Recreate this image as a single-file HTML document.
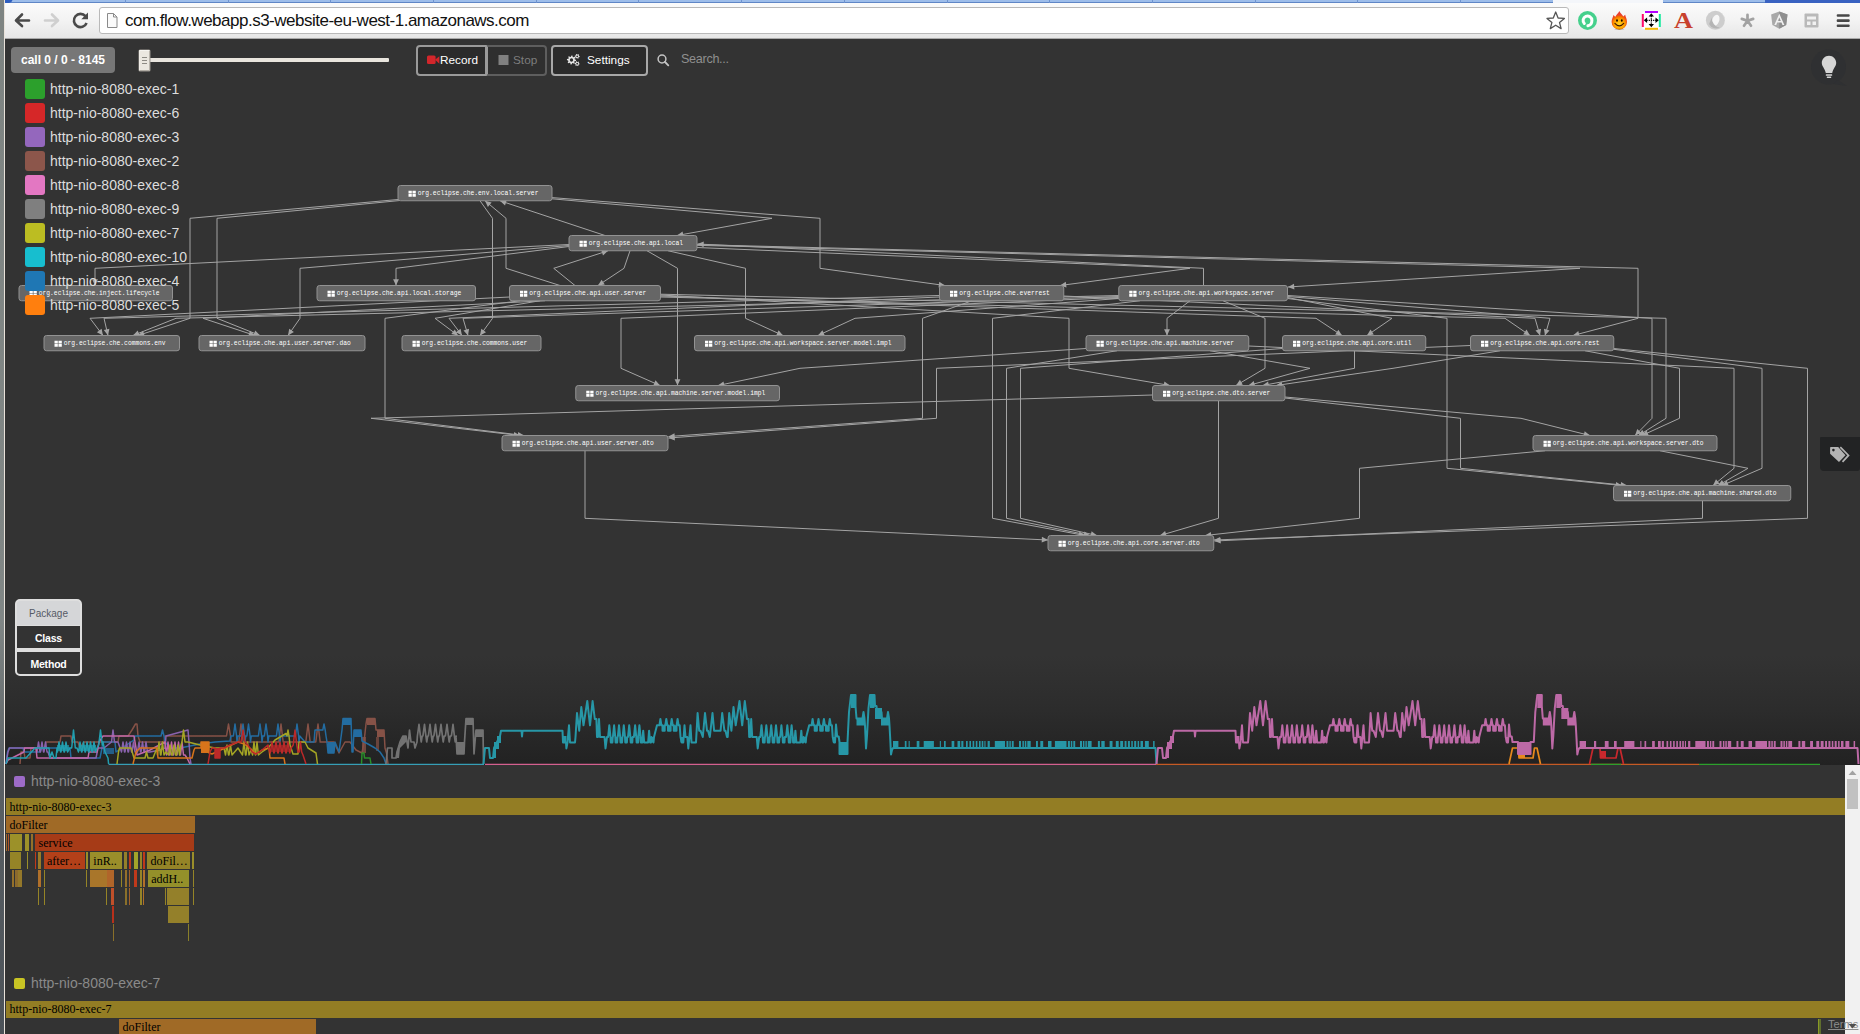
<!DOCTYPE html>
<html><head><meta charset="utf-8"><title>flow</title>
<style>
html,body{margin:0;padding:0}html{overflow:hidden;background:#333}
body{width:1860px;height:1034px;overflow:hidden;position:relative;background:#333;font-family:"Liberation Sans", sans-serif;}
.abs{position:absolute}
#strip{left:0;top:0;width:4px;height:1034px;background:linear-gradient(#7e8482 0,#808685 60%,#5a6064 75%,#4c5258 100%)}
#strip2{left:4px;top:0;width:1px;height:1034px;background:#e9e2da}
#tabs{left:5px;top:0;width:1855px;height:3px;background:#9dbdea}
#toolbar{left:5px;top:3px;width:1855px;height:35px;background:linear-gradient(#fbfbfb,#f3f3f3 50%,#e6e6e6)}
#tbline{left:5px;top:38px;width:1855px;height:1px;background:#a9a9a9}
#url{left:99px;top:7px;width:1468px;height:25px;background:#fff;border:1px solid #b9b9b9;border-radius:3px;box-sizing:content-box}
#urltxt{left:125px;top:10.5px;font-size:17px;line-height:20px;color:#111;white-space:nowrap;letter-spacing:-0.5px}
#badge{left:11px;top:47px;width:104px;height:26px;border-radius:4px;background:#777;color:#fff;font-weight:bold;font-size:12px;line-height:26px;text-align:center}
#track{left:144px;top:58px;width:245px;height:4px;background:#e9e5de;border-radius:1px}
#thumb{left:139px;top:50px;width:9px;height:19px;background:#ebe7e0;border:1px solid;border-color:#f6f4f0 #b9b4ac #b0aba3 #f0ede8;border-radius:1px;box-sizing:content-box;box-shadow:0 0 0 .5px #9a968f}
.btn{box-sizing:border-box;height:31px;top:45px;border:2px solid #999;background:#2b2b2b;color:#fff;font-size:13px;line-height:26px;white-space:nowrap}
.legrow{left:25px;height:20px;white-space:nowrap}
.legsw{position:absolute;left:0;top:0;width:20px;height:20px;border-radius:3px}
.legtx{position:absolute;left:25px;top:0;font-size:14px;line-height:20px;color:#ddd}
.lvl{left:17px;width:63px;text-align:center;font-size:10px;}
</style></head>
<body>
<svg class="abs" style="left:0;top:39px" width="1860" height="660" viewBox="0 39 1860 660" font-family='"Liberation Mono", monospace' font-size="6.3" fill="#fff"><path d="M398 199.5L190 218.3L190 318.3L138 335.5M400 200.5L217 218.3L217 318.3L260 335.5M480 200.75L492.5 218.3L492.5 318.3L480 335.5M552 198.8L772 218.3L677 235.5M552 197.6L820 218.3L820 268.3L945 285.5M560 285.5L506 268.3L506 218.3L485 200.75M605 235.5L500 200.75M575 285.5L553.75 268.3L608 250.75M630 250.75L624 268.3L598 285.5M647 250.75L677.5 268.3L677.5 385.5M668 250.75L745.5 268.3L745.5 318.3L783 335.5M569 246.5L396 268.3L396 285.5M569 245.5L300 268.3L300 318.3L288 335.5M569 244.5L95 268.3L95 285.5M697 247.5L1190 268.3L1060 285.5M697 245.3L1580 268.3L1288 287M697 244.6L1638 268.3L1638 318.3L1573 335.5M1203.5 285.5L1203.5 268.3L697.5 244M509.5 297L90 318.3L103 335.5M545 300.75L203 318.3L255 335.5M540 300.75L435 318.3L458 335.5M520 300.75L385 318.3L385 418.3L524 435.5M660.5 295L1069 318.3L1069 368.3L1170 385.5M660.5 296L1316 318.3L1342 335.5M660.5 297L1505 318.3L1530 335.5M660.5 294.2L1666 318.3L1666 418.3L1638.5 435.5M939.5 295.5L104 318.3L108 335.5M939.5 297L449 318.3L462 335.5M972 300.75L922.5 318.3L922.5 418.3L668.5 436.5M1063.75 296L1535 318.3L1540 335.5M1118.75 295.5L176 318.3L133 335.5M1118.75 296.5L463 318.3L468 335.5M1118.75 297.5L621 318.3L621 368.3L660 385.5M1118.75 298.5L855 318.3L818 335.5M1140 300.75L992.5 318.3L992.5 518.3L1085 535.5M1190 300.75L1167 318.3L1167 335.5M1223 300.75L1265 318.3L1265 368.3L1236 385.5M1287.5 297.5L1392 318.3L1367 335.5M1287.5 298.5L1447 318.3L1447 468.3L1622 485.5M1287.5 296.5L1550 318.3L1545 335.5M1287.5 295.5L1652 318.3L1652 418.3L1635 435.5M1086 348.5L800 368.3L718 385.5M1117 350.75L1006.5 368.3L1006.5 518.3L1090 535.5M1210 350.75L1310 368.3L1248.5 385.5M1248.75 346L1734 368.3L1734 468.3L1713 485.5M1282.5 348.5L1020.5 368.3L1020.5 518.3L1097 535.5M1354.5 350.75L1354.5 368.3L1262.5 385.5M1470.5 345.5L936.5 368.3L936.5 418.3L668.5 438M1500 350.75L1393 368.3L1276 385.5M1585 350.75L1679.5 368.3L1679.5 418.3L1642 435.5M1613.75 349.3L1762 368.3L1762 468.3L1722 485.5M1613.75 348.5L1807.5 368.3L1807.5 518.3L1214 540M1152.5 395L371 418.3L520 435.5M1218.5 400.75L1218.5 518.3L1160 535.5M1285 398L1460.5 418.3L1460.5 468.3L1627 485.5M1285 397L1521 418.3L1590 435.5M585 450.75L585 518.3L1048 540M1660 450.75L1748 468.3L1718 485.5M1545 450.75L1359.5 468.3L1359.5 518.3L1205 535.5M1702.5 500.75L1702.5 518.3L1214.5 541" fill="none" stroke="#a4a4a4" stroke-width="1"/><path d="M138.0 335.5L143.0 330.8L144.8 336.3zM260.0 335.5L253.2 335.9L255.3 330.5zM480.0 335.5L481.3 328.8L486.0 332.2zM677.0 235.5L682.6 231.5L683.6 237.2zM945.0 285.5L938.5 287.5L939.3 281.8zM485.0 200.8L491.6 202.5L487.9 207.0zM500.0 200.8L506.8 199.9L505.0 205.5zM608.0 250.8L603.0 255.4L601.2 249.9zM598.0 285.5L601.6 279.7L604.8 284.5zM677.5 385.5L674.6 379.3L680.4 379.3zM783.0 335.5L776.2 335.6L778.6 330.3zM396.0 285.5L393.1 279.3L398.9 279.3zM288.0 335.5L289.2 328.8L293.9 332.1zM95.0 285.5L92.1 279.3L97.9 279.3zM1060.0 285.5L1065.8 281.8L1066.5 287.6zM1288.0 287.0L1294.0 283.7L1294.4 289.5zM1573.0 335.5L1578.3 331.1L1579.7 336.7zM697.5 244.0L703.8 241.4L703.6 247.2zM103.0 335.5L96.9 332.3L101.6 328.8zM255.0 335.5L248.2 336.3L250.0 330.8zM458.0 335.5L451.3 334.1L454.8 329.5zM524.0 435.5L517.5 437.6L518.2 431.9zM1170.0 385.5L1163.4 387.3L1164.4 381.6zM1342.0 335.5L1335.2 334.5L1338.4 329.7zM1530.0 335.5L1523.2 334.4L1526.5 329.6zM1638.5 435.5L1642.2 429.8L1645.3 434.7zM108.0 335.5L103.8 330.1L109.4 328.8zM462.0 335.5L455.9 332.3L460.6 328.8zM668.5 436.5L674.5 433.2L674.9 438.9zM1540.0 335.5L1535.5 330.4L1541.1 328.7zM133.0 335.5L137.7 330.5L139.8 335.9zM468.0 335.5L463.5 330.4L469.1 328.7zM660.0 385.5L653.2 385.7L655.5 380.3zM818.0 335.5L822.4 330.3L824.8 335.5zM1085.0 535.5L1078.4 537.2L1079.4 531.5zM1167.0 335.5L1164.1 329.3L1169.9 329.3zM1236.0 385.5L1239.9 379.8L1242.8 384.8zM1367.0 335.5L1370.5 329.6L1373.8 334.4zM1622.0 485.5L1615.5 487.8L1616.1 482.0zM1545.0 335.5L1543.9 328.7L1549.5 330.4zM1635.0 435.5L1637.3 429.1L1641.4 433.1zM718.0 385.5L723.5 381.4L724.7 387.1zM1090.0 535.5L1083.3 537.1L1084.5 531.4zM1248.5 385.5L1253.7 381.0L1255.3 386.6zM1713.0 485.5L1716.0 479.3L1719.6 483.8zM1097.0 535.5L1090.3 537.0L1091.6 531.3zM1262.5 385.5L1268.1 381.5L1269.1 387.2zM668.5 438.0L674.5 434.7L674.9 440.4zM1276.0 385.5L1281.7 381.7L1282.6 387.5zM1642.0 435.5L1646.4 430.3L1648.8 435.6zM1722.0 485.5L1726.6 480.4L1728.8 485.7zM1214.0 540.0L1220.1 536.9L1220.3 542.7zM520.0 435.5L513.5 437.7L514.2 431.9zM1160.0 535.5L1165.1 531.0L1166.8 536.5zM1627.0 485.5L1620.5 487.7L1621.1 482.0zM1590.0 435.5L1583.3 436.8L1584.7 431.2zM1048.0 540.0L1041.7 542.6L1041.9 536.8zM1718.0 485.5L1721.9 479.9L1724.8 484.9zM1205.0 535.5L1210.8 531.9L1211.5 537.7zM1214.5 541.0L1220.6 537.8L1220.8 543.6z" fill="#a4a4a4"/><rect x="398" y="185.5" width="154" height="15.25" rx="2.5" fill="#666" stroke="#929292" stroke-width="1"/><path d="M408.5 190.8h3.300v2.600h-3.300zM412.5 190.8h3.300v2.600h-3.300zM408.5 194.1h3.300v2.600h-3.300zM412.5 194.1h3.300v2.600h-3.300z" fill="#fff"/><text x="417.8" y="195.1" textLength="120.6" lengthAdjust="spacingAndGlyphs">org.eclipse.che.env.local.server</text><rect x="569" y="235.5" width="128" height="15.25" rx="2.5" fill="#666" stroke="#929292" stroke-width="1"/><path d="M579.5 240.8h3.300v2.600h-3.300zM583.5 240.8h3.300v2.600h-3.300zM579.5 244.1h3.300v2.600h-3.300zM583.5 244.1h3.300v2.600h-3.300z" fill="#fff"/><text x="588.8" y="245.1" textLength="94.2" lengthAdjust="spacingAndGlyphs">org.eclipse.che.api.local</text><rect x="19" y="285.5" width="153.5" height="15.25" rx="2.5" fill="#666" stroke="#929292" stroke-width="1"/><path d="M29.5 290.8h3.300v2.600h-3.300zM33.5 290.8h3.300v2.600h-3.300zM29.5 294.1h3.300v2.600h-3.300zM33.5 294.1h3.300v2.600h-3.300z" fill="#fff"/><text x="38.8" y="295.1" textLength="120.6" lengthAdjust="spacingAndGlyphs">org.eclipse.che.inject.lifecycle</text><rect x="317" y="285.5" width="158.5" height="15.25" rx="2.5" fill="#666" stroke="#929292" stroke-width="1"/><path d="M327.5 290.8h3.300v2.600h-3.300zM331.5 290.8h3.300v2.600h-3.300zM327.5 294.1h3.300v2.600h-3.300zM331.5 294.1h3.300v2.600h-3.300z" fill="#fff"/><text x="336.8" y="295.1" textLength="124.4" lengthAdjust="spacingAndGlyphs">org.eclipse.che.api.local.storage</text><rect x="509.5" y="285.5" width="151" height="15.25" rx="2.5" fill="#666" stroke="#929292" stroke-width="1"/><path d="M520 290.8h3.300v2.600h-3.300zM524 290.8h3.300v2.600h-3.300zM520 294.1h3.300v2.600h-3.300zM524 294.1h3.300v2.600h-3.300z" fill="#fff"/><text x="529.3" y="295.1" textLength="116.9" lengthAdjust="spacingAndGlyphs">org.eclipse.che.api.user.server</text><rect x="939.5" y="285.5" width="124.25" height="15.25" rx="2.5" fill="#666" stroke="#929292" stroke-width="1"/><path d="M950 290.8h3.300v2.600h-3.300zM954 290.8h3.300v2.600h-3.300zM950 294.1h3.300v2.600h-3.300zM954 294.1h3.300v2.600h-3.300z" fill="#fff"/><text x="959.3" y="295.1" textLength="90.5" lengthAdjust="spacingAndGlyphs">org.eclipse.che.everrest</text><rect x="1118.75" y="285.5" width="168.75" height="15.25" rx="2.5" fill="#666" stroke="#929292" stroke-width="1"/><path d="M1129.25 290.8h3.300v2.600h-3.300zM1133.25 290.8h3.300v2.600h-3.300zM1129.25 294.1h3.300v2.600h-3.300zM1133.25 294.1h3.300v2.600h-3.300z" fill="#fff"/><text x="1138.55" y="295.1" textLength="135.7" lengthAdjust="spacingAndGlyphs">org.eclipse.che.api.workspace.server</text><rect x="44" y="335.5" width="135.5" height="15.25" rx="2.5" fill="#666" stroke="#929292" stroke-width="1"/><path d="M54.5 340.8h3.300v2.600h-3.300zM58.5 340.8h3.300v2.600h-3.300zM54.5 344.1h3.300v2.600h-3.300zM58.5 344.1h3.300v2.600h-3.300z" fill="#fff"/><text x="63.8" y="345.1" textLength="101.8" lengthAdjust="spacingAndGlyphs">org.eclipse.che.commons.env</text><rect x="199" y="335.5" width="166" height="15.25" rx="2.5" fill="#666" stroke="#929292" stroke-width="1"/><path d="M209.5 340.8h3.300v2.600h-3.300zM213.5 340.8h3.300v2.600h-3.300zM209.5 344.1h3.300v2.600h-3.300zM213.5 344.1h3.300v2.600h-3.300z" fill="#fff"/><text x="218.8" y="345.1" textLength="131.9" lengthAdjust="spacingAndGlyphs">org.eclipse.che.api.user.server.dao</text><rect x="402" y="335.5" width="139" height="15.25" rx="2.5" fill="#666" stroke="#929292" stroke-width="1"/><path d="M412.5 340.8h3.300v2.600h-3.300zM416.5 340.8h3.300v2.600h-3.300zM412.5 344.1h3.300v2.600h-3.300zM416.5 344.1h3.300v2.600h-3.300z" fill="#fff"/><text x="421.8" y="345.1" textLength="105.6" lengthAdjust="spacingAndGlyphs">org.eclipse.che.commons.user</text><rect x="694.5" y="335.5" width="210.5" height="15.25" rx="2.5" fill="#666" stroke="#929292" stroke-width="1"/><path d="M705 340.8h3.300v2.600h-3.300zM709 340.8h3.300v2.600h-3.300zM705 344.1h3.300v2.600h-3.300zM709 344.1h3.300v2.600h-3.300z" fill="#fff"/><text x="714.3" y="345.1" textLength="177.2" lengthAdjust="spacingAndGlyphs">org.eclipse.che.api.workspace.server.model.impl</text><rect x="1086" y="335.5" width="162.75" height="15.25" rx="2.5" fill="#666" stroke="#929292" stroke-width="1"/><path d="M1096.5 340.8h3.300v2.600h-3.300zM1100.5 340.8h3.300v2.600h-3.300zM1096.5 344.1h3.300v2.600h-3.300zM1100.5 344.1h3.300v2.600h-3.300z" fill="#fff"/><text x="1105.8" y="345.1" textLength="128.2" lengthAdjust="spacingAndGlyphs">org.eclipse.che.api.machine.server</text><rect x="1282.5" y="335.5" width="143.25" height="15.25" rx="2.5" fill="#666" stroke="#929292" stroke-width="1"/><path d="M1293 340.8h3.300v2.600h-3.300zM1297 340.8h3.300v2.600h-3.300zM1293 344.1h3.300v2.600h-3.300zM1297 344.1h3.300v2.600h-3.300z" fill="#fff"/><text x="1302.3" y="345.1" textLength="109.3" lengthAdjust="spacingAndGlyphs">org.eclipse.che.api.core.util</text><rect x="1470.5" y="335.5" width="143.25" height="15.25" rx="2.5" fill="#666" stroke="#929292" stroke-width="1"/><path d="M1481 340.8h3.300v2.600h-3.300zM1485 340.8h3.300v2.600h-3.300zM1481 344.1h3.300v2.600h-3.300zM1485 344.1h3.300v2.600h-3.300z" fill="#fff"/><text x="1490.3" y="345.1" textLength="109.3" lengthAdjust="spacingAndGlyphs">org.eclipse.che.api.core.rest</text><rect x="575.75" y="385.5" width="203.75" height="15.25" rx="2.5" fill="#666" stroke="#929292" stroke-width="1"/><path d="M586.25 390.8h3.300v2.600h-3.300zM590.25 390.8h3.300v2.600h-3.300zM586.25 394.1h3.300v2.600h-3.300zM590.25 394.1h3.300v2.600h-3.300z" fill="#fff"/><text x="595.55" y="395.1" textLength="169.7" lengthAdjust="spacingAndGlyphs">org.eclipse.che.api.machine.server.model.impl</text><rect x="1152.5" y="385.5" width="132.5" height="15.25" rx="2.5" fill="#666" stroke="#929292" stroke-width="1"/><path d="M1163 390.8h3.300v2.600h-3.300zM1167 390.8h3.300v2.600h-3.300zM1163 394.1h3.300v2.600h-3.300zM1167 394.1h3.300v2.600h-3.300z" fill="#fff"/><text x="1172.3" y="395.1" textLength="98.0" lengthAdjust="spacingAndGlyphs">org.eclipse.che.dto.server</text><rect x="502" y="435.5" width="166" height="15.25" rx="2.5" fill="#666" stroke="#929292" stroke-width="1"/><path d="M512.5 440.8h3.300v2.600h-3.300zM516.5 440.8h3.300v2.600h-3.300zM512.5 444.1h3.300v2.600h-3.300zM516.5 444.1h3.300v2.600h-3.300z" fill="#fff"/><text x="521.8" y="445.1" textLength="131.9" lengthAdjust="spacingAndGlyphs">org.eclipse.che.api.user.server.dto</text><rect x="1533" y="435.5" width="184" height="15.25" rx="2.5" fill="#666" stroke="#929292" stroke-width="1"/><path d="M1543.5 440.8h3.300v2.600h-3.300zM1547.5 440.8h3.300v2.600h-3.300zM1543.5 444.1h3.300v2.600h-3.300zM1547.5 444.1h3.300v2.600h-3.300z" fill="#fff"/><text x="1552.8" y="445.1" textLength="150.8" lengthAdjust="spacingAndGlyphs">org.eclipse.che.api.workspace.server.dto</text><rect x="1613.5" y="485.5" width="177.25" height="15.25" rx="2.5" fill="#666" stroke="#929292" stroke-width="1"/><path d="M1624 490.8h3.300v2.600h-3.300zM1628 490.8h3.300v2.600h-3.300zM1624 494.1h3.300v2.600h-3.300zM1628 494.1h3.300v2.600h-3.300z" fill="#fff"/><text x="1633.3" y="495.1" textLength="143.3" lengthAdjust="spacingAndGlyphs">org.eclipse.che.api.machine.shared.dto</text><rect x="1048" y="535.5" width="165.75" height="15.25" rx="2.5" fill="#666" stroke="#929292" stroke-width="1"/><path d="M1058.5 540.8h3.300v2.600h-3.300zM1062.5 540.8h3.300v2.600h-3.300zM1058.5 544.1h3.300v2.600h-3.300zM1062.5 544.1h3.300v2.600h-3.300z" fill="#fff"/><text x="1067.8" y="545.1" textLength="131.9" lengthAdjust="spacingAndGlyphs">org.eclipse.che.api.core.server.dto</text></svg>
<svg class="abs" style="left:0;top:650px" width="1860" height="116" viewBox="0 650 1860 116"><defs><linearGradient id="tlg" x1="0" y1="0" x2="0" y2="1"><stop offset="0" stop-color="#333"/><stop offset="0.5" stop-color="#2c2c2c"/><stop offset="1" stop-color="#222"/></linearGradient></defs><rect x="5" y="655" width="1855" height="110" fill="url(#tlg)"/><path d="M485 764.3H1156" stroke="#d4608f" stroke-width="1.2"/><path d="M1156 764.3H1699" stroke="#c55a24" stroke-width="1.2"/><path d="M1591 764.3H1621M1699 764.3H1820" stroke="#2ca02c" stroke-width="1.3"/><g opacity=".86"><path d="M20 764L21 752L24 752L25 758L30 758L31 748L45 748L46 742L60 742L61 736L71 736L72 742L78 742L80 748L84 742L118 742L119 736L128 736L132 730L135.5 724L137 724L138 736L140 742L164 742L165 736L225 736L226.5 736L228.5 724L230.5 736L231 742L238.8 742L241 724L243.2 742L278.8 742L281 724L283.2 742L305.8 742L308 724L310.2 742L315.8 742L318 724L320.2 742L320 742L334 742L339 753L345 742L350 742L356 750L362 753L364 742L366 724L367 718.5L375 718.5L376 730L384 730L385 748L386.5 753L388 764" fill="none" stroke="#96594c" stroke-width="1.5" stroke-linejoin="round" /><rect x="367" y="718" width="8" height="7" fill="#96594c"/><rect x="377" y="730" width="7" height="7" fill="#96594c"/><rect x="362" y="737" width="4" height="16" fill="#96594c" opacity=".8"/><rect x="376" y="737" width="3" height="14" fill="#96594c" opacity=".7"/><path d="M6 764L7.5 752L9 748L23 748L24 752L40 752L42 748L70 748L71 758L100 758L102 748L103 742L115 742L116 752L134 740L135 736L158 736L161 736L162.5 730L164 736L165 742L170 748L180 748L200 744L215 742L230 741L231 736L233.4 736L235 724L236.6 736L237 742L237.8 736L241.4 736L243 724L244.6 736L245 742L245.8 736L246.9 736L248.5 724L250.1 736L250.5 742L251.3 736L254 736L258.4 736L260 724L261.6 736L262 742L262.8 736L264.4 736L266 724L267.6 736L268 742L268.8 736L272 736L276.4 736L278 724L279.6 736L280 742L280.8 736L290 736L295.4 736L297 724L298.6 736L299 742L299.8 736L305 742L314 742L315 730L321 730L322.8 730L324 724L325.2 730L326 736L327 742L328 753L334 753L335 742L339 752L342 730L343 718.5L351 718.5L352 752L353 752L354 730L361 730L362 741L368 744L375 748L380 752L384 758L386 764" fill="none" stroke="#2378b5" stroke-width="1.5" stroke-linejoin="round" /><rect x="328" y="742" width="6" height="11" fill="#2378b5"/><rect x="343" y="718" width="8" height="7" fill="#2378b5"/><rect x="354" y="730" width="7" height="7" fill="#2378b5"/><rect x="103" y="748" width="11" height="6" fill="#2378b5" opacity=".8"/><path d="M6 764L8 752L9.5 748L36 748L37 752L38.5 742L40 752L40.5 752L42 742L43.5 752L44 752L45.5 742L47 752L48 752L50 758L96 758L98 748L104 748L111.5 742L113 730L114.5 742L118 742L121.5 752L123 742L124.5 752L125 752L126.5 742L128 752L128.5 752L130 742L131.5 752L132 752L133.5 742L135 752L137.5 752L139 742L140.5 752L141 752L142.5 742L144 752L144.5 752L146 742L147.5 752L150 752L160 750L165 748L166 736L188 730L189 742L190 758L191 764" fill="none" stroke="#9a6cc4" stroke-width="1.5" stroke-linejoin="round" /><path d="M6 764L8 760L24 752L24.5 748L36 748L37 758L88 758L89 752L97 752L99 742L103 736L134 736L136 748L137 755L150 750L165 742L166.5 755L168 742L169.5 755L170 755L171.5 742L173 755L173.5 755L175 742L176.5 755L177 755L178.5 742L180 755L180.5 755L182 742L183.5 755L185 755L187 758L190 764" fill="none" stroke="#dc74bd" stroke-width="1.5" stroke-linejoin="round" /><path d="M6 764L8 758L26 758L35 748L49 748L50 758L52 752L54 758L56 758L57 748L57.5 752L59 742L60.5 752L61 752L62.5 742L64 752L64.5 752L66 742L67.5 752L70 748L71.7 748L73.5 730L75.3 748L77 748L78.5 752L80 742L81.5 752L82 752L83.5 742L85 752L85.5 752L87 742L88.5 752L89 752L90.5 742L92 752L92.5 752L94 742L95.5 752L97 748L98.7 745L100.5 730L102.3 745L103 742L105 752L108 758L108.6 764" fill="none" stroke="#22b3c6" stroke-width="1.5" stroke-linejoin="round" /><path d="M108.600 764.300H484" stroke="#3ab3cf" stroke-width="1.200"/><rect x="57" y="745" width="12" height="6" fill="#22b3c6" opacity=".7"/><rect x="79" y="745" width="17" height="6" fill="#22b3c6" opacity=".7"/><path d="M117 764L118.5 752L119.5 748L131 748L134 758L145 758L146.5 752L148 758L153 758L157 748L157.5 755L159 742L160.5 755L161 755L162.5 742L164 755L166 752L168.5 755L170 745L171.5 755L172.5 755L174 745L175.5 755L176.5 755L178 745L179.5 755L181 745L182 742L183.5 730L185 742L188 742L200 745L215 748L224 748L225.5 755L227 745L228.5 755L229 755L230.5 745L232 755L238 748L242.5 755L244 742L245.5 755L246 755L247.5 742L249 755L251 750L252.6 755L254 742L255.4 755L255.6 755L257 742L258.4 755L262 752L268 748L275 740L286 733.5L287 736L288 730L289 736L290 745L293 754L298 754L299 742L305 742L308 748L316 753L317.5 764" fill="none" stroke="#b9ba24" stroke-width="1.5" stroke-linejoin="round" /><path d="M133 764L136 752L140 748L157 748L158 758L192 758L194 750L195 748L201 748L201 742L209 742L209 753L212 754L225 748L238 742L244 744L250 748L256 754L262 750L269 748L269.5 753L270 758L284 758L285 764" fill="none" stroke="#f5811a" stroke-width="1.5" stroke-linejoin="round" /><rect x="201" y="742" width="8" height="11" fill="#f5811a"/><path d="M208 764L210 752L212 748L215 748L215 758L220 758L220 748L224 748L230 745L238 742L241 742L243 730L245 742L248 745L252 752L256 754L262 750L268 745L270.2 753L272 742L273.8 753L274.2 753L276 742L277.8 753L278.2 753L280 742L281.8 753L282.2 753L284 742L285.8 753L286.2 753L288 742L289.8 753L291 748L293.2 745L295 730L296.8 745L298 752L299.3 752L300.5 742L301.7 752L303 755L306 764" fill="none" stroke="#d42a2a" stroke-width="1.5" stroke-linejoin="round" /><rect x="215" y="748" width="5" height="10" fill="#d42a2a"/><rect x="271" y="745" width="18" height="7" fill="#d42a2a" opacity=".55"/><path d="M361.5 764L362 753L364 753L364.5 758L370 758L371 764" fill="none" stroke="#2ca02c" stroke-width="1.5" stroke-linejoin="round" /><path d="M386 764L387.5 748L392 748L392 758L396 758L397 752L400 742L403 736L406 736L408 748L409.5 730L411 742L414 742L415 748L417 742L417.4 736L419 724.4L420.4 736L421.2 742L422.2 736L422.9 736L424.5 724.4L425.9 736L426.7 742L427.7 736L428.4 736L430 724.4L431.4 736L432.2 742L433.2 736L433.9 736L435.5 724.4L436.9 736L437.7 742L438.7 736L439.4 736L441 724.4L442.4 736L443.2 742L444.2 736L445.4 736L447 724.4L448.4 736L449.2 742L450.2 736L451.4 736L453 724.4L454.4 736L455.2 742L456.2 736L456 736L457 754L464 754L464.5 742L466 718.5L473 718.5L474 754L476 730L483 730L483.5 764" fill="none" stroke="#7f7f7f" stroke-width="1.7" stroke-linejoin="round" /><rect x="457" y="742" width="7" height="12" fill="#7f7f7f"/><rect x="466" y="718" width="7" height="7" fill="#7f7f7f"/><rect x="476" y="730" width="7" height="7" fill="#7f7f7f"/><path d="M396 758L397 750L403 736L406 736L406 742L400 748L399 758z" fill="#7f7f7f"/></g><g fill="#2797a7"><rect x="493.0" y="748" width="3.0" height="10"/><rect x="494.0" y="742" width="5.0" height="7"/><rect x="497.0" y="736" width="4.0" height="7"/><rect x="563.0" y="736" width="3.5" height="6.5"/><rect x="610.8" y="737" width="1.6" height="5.5"/><rect x="615.6" y="737" width="1.6" height="5.5"/><rect x="620.5" y="737" width="1.6" height="5.5"/><rect x="625.3" y="737" width="1.6" height="5.5"/><rect x="630.7" y="737" width="1.6" height="5.5"/><rect x="636.6" y="737" width="1.6" height="5.5"/><rect x="640.9" y="737" width="1.6" height="5.5"/><rect x="651.5" y="737" width="2.5" height="5.5"/><rect x="662.5" y="725.3" width="2.2" height="5.4"/><rect x="668.0" y="725.3" width="2.6" height="5.4"/><rect x="673.8" y="725.3" width="2.7" height="5.4"/><rect x="680.5" y="737" width="3.0" height="5.5"/><rect x="763.0" y="737" width="1.6" height="5.5"/><rect x="767.8" y="737" width="1.6" height="5.5"/><rect x="772.7" y="737" width="1.6" height="5.5"/><rect x="777.5" y="737" width="1.6" height="5.5"/><rect x="782.9" y="737" width="1.6" height="5.5"/><rect x="788.8" y="737" width="1.6" height="5.5"/><rect x="793.1" y="737" width="1.6" height="5.5"/><rect x="803.7" y="737" width="2.5" height="5.5"/><rect x="814.7" y="725.3" width="2.2" height="5.4"/><rect x="820.2" y="725.3" width="2.6" height="5.4"/><rect x="826.0" y="725.3" width="2.7" height="5.4"/><rect x="832.7" y="737" width="2.5" height="5.5"/><rect x="839.5" y="742" width="8.0" height="12"/><rect x="851.0" y="695" width="4.5" height="13"/><rect x="856.5" y="718.5" width="8.0" height="7"/><rect x="870.0" y="695" width="4.5" height="13"/><rect x="875.0" y="708" width="7.0" height="11"/><rect x="881.0" y="718.5" width="8.5" height="7"/><rect x="893.0" y="741" width="5.4" height="7"/><rect x="904.8" y="741" width="1.7" height="7"/><rect x="908.6" y="741" width="1.1" height="7"/><rect x="916.7" y="741" width="2.7" height="7"/><rect x="923.7" y="741" width="10.2" height="7"/><rect x="939.8" y="741" width="1.1" height="7"/><rect x="944.0" y="741" width="1.7" height="7"/><rect x="951.6" y="741" width="2.7" height="7"/><rect x="957.5" y="741" width="2.7" height="7"/><rect x="961.3" y="741" width="2.1" height="7"/><rect x="966.0" y="741" width="1.7" height="7"/><rect x="969.4" y="741" width="1.6" height="7"/><rect x="972.6" y="741" width="1.6" height="7"/><rect x="975.8" y="741" width="1.6" height="7"/><rect x="979.0" y="741" width="1.6" height="7"/><rect x="981.7" y="741" width="1.6" height="7"/><rect x="984.4" y="741" width="1.1" height="7"/><rect x="987.6" y="741" width="2.2" height="7"/><rect x="994.8" y="741" width="10.2" height="7"/><rect x="1006.5" y="741" width="1.9" height="7"/><rect x="1009.4" y="741" width="1.4" height="7"/><rect x="1011.8" y="741" width="1.9" height="7"/><rect x="1019.0" y="741" width="2.0" height="7"/><rect x="1022.4" y="741" width="1.5" height="7"/><rect x="1024.8" y="741" width="1.5" height="7"/><rect x="1027.3" y="741" width="3.4" height="7"/><rect x="1036.0" y="741" width="1.9" height="7"/><rect x="1040.3" y="741" width="2.9" height="7"/><rect x="1048.0" y="741" width="3.5" height="7"/><rect x="1054.9" y="741" width="11.6" height="7"/><rect x="1067.9" y="741" width="2.0" height="7"/><rect x="1070.8" y="741" width="1.5" height="7"/><rect x="1073.3" y="741" width="1.9" height="7"/><rect x="1080.0" y="741" width="2.0" height="7"/><rect x="1082.9" y="741" width="1.5" height="7"/><rect x="1085.4" y="741" width="1.4" height="7"/><rect x="1087.8" y="741" width="3.8" height="7"/><rect x="1097.9" y="741" width="2.0" height="7"/><rect x="1101.3" y="741" width="3.4" height="7"/><rect x="1109.6" y="741" width="2.9" height="7"/><rect x="1115.8" y="741" width="2.9" height="7"/><rect x="1120.2" y="741" width="2.9" height="7"/><rect x="1124.6" y="741" width="1.9" height="7"/><rect x="1127.9" y="741" width="2.0" height="7"/><rect x="1131.3" y="741" width="1.5" height="7"/><rect x="1134.2" y="741" width="2.0" height="7"/><rect x="1137.6" y="741" width="1.5" height="7"/><rect x="1140.5" y="741" width="2.5" height="7"/><rect x="1144.9" y="741" width="3.9" height="7"/><rect x="1153.1" y="741" width="1.5" height="7"/></g><path d="M483.5 764L485 748L489 748L490 758L493 758L494 748L497 742L500 736L501 730.7L521.5 730.7L522 736.5L522.6 730.7L562.5 730.7L563 742.5L566 742.5L566.4 748.4L567.5 742.5L569 725.3L570 742.5L575 742.5L575.5 737L577 713L579.2 730.7L581.3 707L583.5 725.3L587.3 701L590 725.3L592.6 701L594.8 719L596.4 719L597 737L598 737L599 719L600 737L604.5 737L605.5 748.4L607 737L608.1 737L609.3 725.3L610.5 737L610.8 742.5L612.4 742.5L612.7 737L612.9 737L614.1 725.3L615.3 737L615.6 742.5L617.2 742.5L617.5 737L617.8 737L619 725.3L620.2 737L620.5 742.5L622.1 742.5L622.4 737L622.6 737L623.8 725.3L625 737L625.3 742.5L626.9 742.5L627.2 737L628 737L629.2 725.3L630.4 737L630.7 742.5L632.3 742.5L632.6 737L633.9 737L635.1 725.3L636.3 737L636.6 742.5L638.2 742.5L638.5 737L638.2 737L639.4 725.3L640.6 737L640.9 742.5L642.5 742.5L642.8 737L641.5 742.5L642.2 742.5L643.2 730.7L644.2 742.5L648.1 742.5L649.1 730.7L650.1 742.5L651 742.5L651.5 737L653.5 742.5L654 737L657 725.3L658.8 725.3L659.4 725.3L660.4 719L661.4 725.3L662.5 725.3L662.5 730.7L664.7 730.7L664.7 725.3L665.3 725.3L666.3 719L667.3 725.3L668 725.3L668 730.7L670.6 730.7L670.6 725.3L670.7 725.3L671.7 719L672.7 725.3L673.8 725.3L673.8 730.7L676.5 730.7L676.5 725.3L676.6 725.3L677.6 719L678.6 725.3L679.7 725.3L680.5 737L681.8 742.5L683.3 742.5L684.5 725.3L685.5 737L687.3 737L688.3 748.4L689.4 737L690.5 725.3L691.5 742.5L696 742.5L697.6 713L699.2 730.7L700.5 730.7L702.8 737L705 713L707 730.7L708 730.7L709.8 737L712.5 713L714.1 730.7L720.6 730.7L722.2 713L724.4 730.7L725.5 730.7L727 737L727.7 737L729.2 713L731.4 730.7L733.5 707L735.7 725.3L739.5 701L742.2 725.3L744.8 701L747 719L748.6 719L749.2 737L750.2 737L751.2 719L752.2 737L756.7 737L757.7 748.4L759.2 737L760.3 737L761.5 725.3L762.7 737L763 742.5L764.6 742.5L764.9 737L765.1 737L766.3 725.3L767.5 737L767.8 742.5L769.4 742.5L769.7 737L770 737L771.2 725.3L772.4 737L772.7 742.5L774.3 742.5L774.6 737L774.8 737L776 725.3L777.2 737L777.5 742.5L779.1 742.5L779.4 737L780.2 737L781.4 725.3L782.6 737L782.9 742.5L784.5 742.5L784.8 737L786.1 737L787.3 725.3L788.5 737L788.8 742.5L790.4 742.5L790.7 737L790.4 737L791.6 725.3L792.8 737L793.1 742.5L794.7 742.5L795 737L793.7 742.5L794.4 742.5L795.4 730.7L796.4 742.5L800.3 742.5L801.3 730.7L802.3 742.5L803.2 742.5L803.7 737L805.7 742.5L806.2 737L809.2 725.3L811 725.3L811.6 725.3L812.6 719L813.6 725.3L814.7 725.3L814.7 730.7L816.9 730.7L816.9 725.3L817.5 725.3L818.5 719L819.5 725.3L820.2 725.3L820.2 730.7L822.8 730.7L822.8 725.3L822.9 725.3L823.9 719L824.9 725.3L826 725.3L826 730.7L828.7 730.7L828.7 725.3L828.8 725.3L829.8 719L830.8 725.3L831.9 725.3L832.7 737L834 742.5L835 742.5L836 724.5L837.2 736.5L838.7 736.5L839.5 742L839.5 742L839.5 754L847.5 754L847.5 742L847.5 742L849 712L851 695L855.5 695L855.5 706L856.5 718.5L862.5 718.5L863.5 712L864.5 718.5L865 725.5L866 748.5L867 736L868.5 708L870 695L874.5 695L875 706L876.5 706L877 712L881.5 712L882 718.5L887 718.5L888 712L889 718.5L889.5 725.5L890.3 740L891 754.5L892 750L893 748L1155.5 748L1156.5 764" fill="none" stroke="#2797a7" stroke-width="2" stroke-linejoin="round" /><path d="M1509 764L1512.5 748L1518.5 748L1519 758L1533 758L1534.5 748L1537 748L1540.5 764" fill="none" stroke="#e8891c" stroke-width="1.7" stroke-linejoin="round" /><rect x="1519" y="752" width="6" height="6" fill="#e8891c"/><path d="M1589.5 764L1593 748L1600 748L1600.5 758L1616 758L1618 748L1620 748L1623.5 764" fill="none" stroke="#c9282d" stroke-width="1.7" stroke-linejoin="round" /><rect x="1601" y="751" width="5" height="7" fill="#c9282d"/><g fill="#bd69a6"><rect x="1166.0" y="748" width="3.0" height="10"/><rect x="1167.0" y="742" width="5.0" height="7"/><rect x="1170.0" y="736" width="4.0" height="7"/><rect x="1236.0" y="736" width="3.5" height="6.5"/><rect x="1283.8" y="737" width="1.6" height="5.5"/><rect x="1288.6" y="737" width="1.6" height="5.5"/><rect x="1293.5" y="737" width="1.6" height="5.5"/><rect x="1298.3" y="737" width="1.6" height="5.5"/><rect x="1303.7" y="737" width="1.6" height="5.5"/><rect x="1309.6" y="737" width="1.6" height="5.5"/><rect x="1313.9" y="737" width="1.6" height="5.5"/><rect x="1324.5" y="737" width="2.5" height="5.5"/><rect x="1335.5" y="725.3" width="2.2" height="5.4"/><rect x="1341.0" y="725.3" width="2.6" height="5.4"/><rect x="1346.8" y="725.3" width="2.7" height="5.4"/><rect x="1353.5" y="737" width="3.0" height="5.5"/><rect x="1436.0" y="737" width="1.6" height="5.5"/><rect x="1440.8" y="737" width="1.6" height="5.5"/><rect x="1445.7" y="737" width="1.6" height="5.5"/><rect x="1450.5" y="737" width="1.6" height="5.5"/><rect x="1455.9" y="737" width="1.6" height="5.5"/><rect x="1461.8" y="737" width="1.6" height="5.5"/><rect x="1466.1" y="737" width="1.6" height="5.5"/><rect x="1476.7" y="737" width="2.5" height="5.5"/><rect x="1487.7" y="725.3" width="2.2" height="5.4"/><rect x="1493.2" y="725.3" width="2.6" height="5.4"/><rect x="1499.0" y="725.3" width="2.7" height="5.4"/><rect x="1505.7" y="737" width="2.5" height="5.5"/><rect x="1518.0" y="742" width="12.5" height="12"/><rect x="1537.3" y="695" width="4.5" height="13"/><rect x="1542.8" y="718.5" width="8.0" height="7"/><rect x="1556.3" y="695" width="4.5" height="13"/><rect x="1561.3" y="708" width="7.0" height="11"/><rect x="1567.3" y="718.5" width="8.5" height="7"/><rect x="1579.6" y="741" width="6.4" height="7"/><rect x="1594.0" y="741" width="2.2" height="7"/><rect x="1604.8" y="741" width="3.8" height="7"/><rect x="1614.0" y="741" width="2.7" height="7"/><rect x="1624.2" y="741" width="10.2" height="7"/><rect x="1640.3" y="741" width="1.1" height="7"/><rect x="1644.5" y="741" width="1.7" height="7"/><rect x="1652.1" y="741" width="2.7" height="7"/><rect x="1658.0" y="741" width="2.7" height="7"/><rect x="1661.8" y="741" width="2.1" height="7"/><rect x="1666.5" y="741" width="1.7" height="7"/><rect x="1669.9" y="741" width="1.6" height="7"/><rect x="1673.1" y="741" width="1.6" height="7"/><rect x="1676.3" y="741" width="1.6" height="7"/><rect x="1679.5" y="741" width="1.6" height="7"/><rect x="1682.2" y="741" width="1.6" height="7"/><rect x="1684.9" y="741" width="1.1" height="7"/><rect x="1688.1" y="741" width="2.2" height="7"/><rect x="1695.3" y="741" width="10.2" height="7"/><rect x="1707.0" y="741" width="1.9" height="7"/><rect x="1709.9" y="741" width="1.4" height="7"/><rect x="1712.3" y="741" width="1.9" height="7"/><rect x="1719.5" y="741" width="2.0" height="7"/><rect x="1722.9" y="741" width="1.5" height="7"/><rect x="1725.3" y="741" width="1.5" height="7"/><rect x="1727.8" y="741" width="3.4" height="7"/><rect x="1736.5" y="741" width="1.9" height="7"/><rect x="1740.8" y="741" width="2.9" height="7"/><rect x="1748.5" y="741" width="3.5" height="7"/><rect x="1755.4" y="741" width="11.6" height="7"/><rect x="1768.4" y="741" width="2.0" height="7"/><rect x="1771.3" y="741" width="1.5" height="7"/><rect x="1773.8" y="741" width="1.9" height="7"/><rect x="1780.5" y="741" width="2.0" height="7"/><rect x="1783.4" y="741" width="1.5" height="7"/><rect x="1785.9" y="741" width="1.4" height="7"/><rect x="1788.3" y="741" width="3.8" height="7"/><rect x="1798.4" y="741" width="2.0" height="7"/><rect x="1801.8" y="741" width="3.4" height="7"/><rect x="1810.1" y="741" width="2.9" height="7"/><rect x="1816.3" y="741" width="2.9" height="7"/><rect x="1820.7" y="741" width="2.9" height="7"/><rect x="1825.1" y="741" width="1.9" height="7"/><rect x="1828.4" y="741" width="2.0" height="7"/><rect x="1831.8" y="741" width="1.5" height="7"/><rect x="1834.7" y="741" width="2.0" height="7"/><rect x="1838.1" y="741" width="1.5" height="7"/><rect x="1841.0" y="741" width="2.5" height="7"/><rect x="1845.4" y="741" width="3.9" height="7"/><rect x="1853.6" y="741" width="1.5" height="7"/></g><path d="M1156.5 764L1158 748L1162 748L1163 758L1166 758L1167 748L1170 742L1173 736L1174 730.7L1194.5 730.7L1195 736.5L1195.6 730.7L1235.5 730.7L1236 742.5L1239 742.5L1239.4 748.4L1240.5 742.5L1242 725.3L1243 742.5L1248 742.5L1248.5 737L1250 713L1252.2 730.7L1254.3 707L1256.5 725.3L1260.3 701L1263 725.3L1265.6 701L1267.8 719L1269.4 719L1270 737L1271 737L1272 719L1273 737L1277.5 737L1278.5 748.4L1280 737L1281.1 737L1282.3 725.3L1283.5 737L1283.8 742.5L1285.4 742.5L1285.7 737L1285.9 737L1287.1 725.3L1288.3 737L1288.6 742.5L1290.2 742.5L1290.5 737L1290.8 737L1292 725.3L1293.2 737L1293.5 742.5L1295.1 742.5L1295.4 737L1295.6 737L1296.8 725.3L1298 737L1298.3 742.5L1299.9 742.5L1300.2 737L1301 737L1302.2 725.3L1303.4 737L1303.7 742.5L1305.3 742.5L1305.6 737L1306.9 737L1308.1 725.3L1309.3 737L1309.6 742.5L1311.2 742.5L1311.5 737L1311.2 737L1312.4 725.3L1313.6 737L1313.9 742.5L1315.5 742.5L1315.8 737L1314.5 742.5L1315.2 742.5L1316.2 730.7L1317.2 742.5L1321.1 742.5L1322.1 730.7L1323.1 742.5L1324 742.5L1324.5 737L1326.5 742.5L1327 737L1330 725.3L1331.8 725.3L1332.4 725.3L1333.4 719L1334.4 725.3L1335.5 725.3L1335.5 730.7L1337.7 730.7L1337.7 725.3L1338.3 725.3L1339.3 719L1340.3 725.3L1341 725.3L1341 730.7L1343.6 730.7L1343.6 725.3L1343.7 725.3L1344.7 719L1345.7 725.3L1346.8 725.3L1346.8 730.7L1349.5 730.7L1349.5 725.3L1349.6 725.3L1350.6 719L1351.6 725.3L1352.7 725.3L1353.5 737L1354.8 742.5L1356.3 742.5L1357.5 725.3L1358.5 737L1360.3 737L1361.3 748.4L1362.4 737L1363.5 725.3L1364.5 742.5L1369 742.5L1370.6 713L1372.2 730.7L1373.5 730.7L1375.8 737L1378 713L1380 730.7L1381 730.7L1382.8 737L1385.5 713L1387.1 730.7L1393.6 730.7L1395.2 713L1397.4 730.7L1398.5 730.7L1400 737L1400.7 737L1402.2 713L1404.4 730.7L1406.5 707L1408.7 725.3L1412.5 701L1415.2 725.3L1417.8 701L1420 719L1421.6 719L1422.2 737L1423.2 737L1424.2 719L1425.2 737L1429.7 737L1430.7 748.4L1432.2 737L1433.3 737L1434.5 725.3L1435.7 737L1436 742.5L1437.6 742.5L1437.9 737L1438.1 737L1439.3 725.3L1440.5 737L1440.8 742.5L1442.4 742.5L1442.7 737L1443 737L1444.2 725.3L1445.4 737L1445.7 742.5L1447.3 742.5L1447.6 737L1447.8 737L1449 725.3L1450.2 737L1450.5 742.5L1452.1 742.5L1452.4 737L1453.2 737L1454.4 725.3L1455.6 737L1455.9 742.5L1457.5 742.5L1457.8 737L1459.1 737L1460.3 725.3L1461.5 737L1461.8 742.5L1463.4 742.5L1463.7 737L1463.4 737L1464.6 725.3L1465.8 737L1466.1 742.5L1467.7 742.5L1468 737L1466.7 742.5L1467.4 742.5L1468.4 730.7L1469.4 742.5L1473.3 742.5L1474.3 730.7L1475.3 742.5L1476.2 742.5L1476.7 737L1478.7 742.5L1479.2 737L1482.2 725.3L1484 725.3L1484.6 725.3L1485.6 719L1486.6 725.3L1487.7 725.3L1487.7 730.7L1489.9 730.7L1489.9 725.3L1490.5 725.3L1491.5 719L1492.5 725.3L1493.2 725.3L1493.2 730.7L1495.8 730.7L1495.8 725.3L1495.9 725.3L1496.9 719L1497.9 725.3L1499 725.3L1499 730.7L1501.7 730.7L1501.7 725.3L1501.8 725.3L1502.8 719L1503.8 725.3L1504.9 725.3L1505.7 737L1507 742.5L1508 742.5L1509 724.5L1510.2 736.5L1511.7 736.5L1512.5 742L1518 742L1518 754L1530.5 754L1530.5 742L1533.8 742L1535.3 712L1537.3 695L1541.8 695L1541.8 706L1542.8 718.5L1548.8 718.5L1549.8 712L1550.8 718.5L1551.3 725.5L1552.3 748.5L1553.3 736L1554.8 708L1556.3 695L1560.8 695L1561.3 706L1562.8 706L1563.3 712L1567.8 712L1568.3 718.5L1573.3 718.5L1574.3 712L1575.3 718.5L1575.8 725.5L1576.6 740L1577.3 754.5L1578.3 750L1579.3 748L1857.5 748L1858.5 764" fill="none" stroke="#bd69a6" stroke-width="2" stroke-linejoin="round" /></svg>
<style>.fb{overflow:hidden;white-space:nowrap;font-family:"Liberation Serif", serif;font-size:12px;line-height:17px;color:#000}.fb span{position:absolute;left:3.5px;top:0.5px}.fh{font-size:14px;line-height:18px;color:#8a8a8a;white-space:nowrap;left:31px}</style><div class="abs" style="left:5px;top:765px;width:1855px;height:269px;background:#333"></div><div class="abs" style="left:14px;top:776px;width:11px;height:11px;border-radius:2px;background:#9d6bc8"></div><div class="abs fh" style="top:772px">http-nio-8080-exec-3</div><div class="abs fb" style="left:6px;top:798.2px;width:1839px;height:17px;background:#937d24"><span>http-nio-8080-exec-3</span></div><div class="abs fb" style="left:6px;top:816.2px;width:188.7px;height:17px;background:#a06a26"><span>doFilter</span></div><div class="abs" style="left:6px;top:834.2px;width:1px;height:17px;background:#a0692a"></div><div class="abs" style="left:7.8px;top:834.2px;width:0.8px;height:17px;background:#b0552a"></div><div class="abs" style="left:9.9px;top:834.2px;width:11.7px;height:17px;background:#9c9129"></div><div class="abs" style="left:25.2px;top:834.2px;width:4px;height:17px;background:#9c9129"></div><div class="abs" style="left:30.5px;top:834.2px;width:2.8px;height:17px;background:#94702a"></div><div class="abs fb" style="left:35.1px;top:834.2px;width:158.8px;height:17px;background:#a63b17"><span>service</span></div><div class="abs" style="left:10.4px;top:852.2px;width:10.4px;height:17px;background:#958427"></div><div class="abs" style="left:26.8px;top:852.2px;width:1px;height:17px;background:#9a8e2a"></div><div class="abs" style="left:34.6px;top:852.2px;width:1.4px;height:17px;background:#c0391b"></div><div class="abs" style="left:38.3px;top:852.2px;width:2.8px;height:17px;background:#9a7a28"></div><div class="abs fb" style="left:43.5px;top:852.2px;width:41.6px;height:17px;background:#b34019"><span>after…</span></div><div class="abs" style="left:86px;top:852.2px;width:1.5px;height:17px;background:#9a8e2a"></div><div class="abs fb" style="left:89.8px;top:852.2px;width:32.5px;height:17px;background:#9a8e2a"><span>inR..</span></div><div class="abs" style="left:124.4px;top:852.2px;width:2.4px;height:17px;background:#94802a"></div><div class="abs" style="left:128.6px;top:852.2px;width:2.1px;height:17px;background:#c0391b"></div><div class="abs" style="left:134px;top:852.2px;width:4px;height:17px;background:#a3a32a"></div><div class="abs" style="left:140px;top:852.2px;width:1.9px;height:17px;background:#958427"></div><div class="abs" style="left:143.2px;top:852.2px;width:1.8px;height:17px;background:#c0391b"></div><div class="abs fb" style="left:147px;top:852.2px;width:43px;height:17px;background:#958427"><span>doFil…</span></div><div class="abs" style="left:191.8px;top:852.2px;width:2.1px;height:17px;background:#9a8e2a"></div><div class="abs" style="left:11.7px;top:870.2px;width:2.8px;height:17px;background:#94702a"></div><div class="abs" style="left:14.5px;top:870.2px;width:3.5px;height:17px;background:#8c6a2c"></div><div class="abs" style="left:18px;top:870.2px;width:3.6px;height:17px;background:#94782a"></div><div class="abs" style="left:38.3px;top:870.2px;width:2.3px;height:17px;background:#b0702a"></div><div class="abs" style="left:43.7px;top:870.2px;width:1.1px;height:17px;background:#958427"></div><div class="abs" style="left:86px;top:870.2px;width:1.3px;height:17px;background:#958427"></div><div class="abs" style="left:89.8px;top:870.2px;width:16.9px;height:17px;background:#a9762a"></div><div class="abs" style="left:106.7px;top:870.2px;width:7.8px;height:17px;background:#b0652a"></div><div class="abs" style="left:121px;top:870.2px;width:1.3px;height:17px;background:#958427"></div><div class="abs" style="left:124.9px;top:870.2px;width:1.9px;height:17px;background:#94702a"></div><div class="abs" style="left:128.6px;top:870.2px;width:1.6px;height:17px;background:#a0602a"></div><div class="abs" style="left:134px;top:870.2px;width:3.2px;height:17px;background:#c0391b"></div><div class="abs" style="left:140px;top:870.2px;width:1.9px;height:17px;background:#958427"></div><div class="abs" style="left:142.6px;top:870.2px;width:2.4px;height:17px;background:#b0702a"></div><div class="abs fb" style="left:147.8px;top:870.2px;width:41.7px;height:17px;background:#94902a"><span>addH..</span></div><div class="abs" style="left:192.6px;top:870.2px;width:1.3px;height:17px;background:#958427"></div><div class="abs" style="left:38.3px;top:888.2px;width:0.8px;height:17px;background:#958427"></div><div class="abs" style="left:43.7px;top:888.2px;width:1.1px;height:17px;background:#958427"></div><div class="abs" style="left:106.2px;top:888.2px;width:0.8px;height:17px;background:#958427"></div><div class="abs" style="left:111.4px;top:888.2px;width:2.6px;height:17px;background:#c0502a"></div><div class="abs" style="left:124.9px;top:888.2px;width:1.9px;height:17px;background:#8a702a"></div><div class="abs" style="left:128.6px;top:888.2px;width:1.6px;height:17px;background:#a0602a"></div><div class="abs" style="left:140px;top:888.2px;width:1.9px;height:17px;background:#958427"></div><div class="abs" style="left:142.6px;top:888.2px;width:1.1px;height:17px;background:#b0702a"></div><div class="abs" style="left:164.5px;top:888.2px;width:1.3px;height:17px;background:#958427"></div><div class="abs" style="left:167.1px;top:888.2px;width:22.1px;height:17px;background:#94802a"></div><div class="abs" style="left:192.6px;top:888.2px;width:1.3px;height:17px;background:#958427"></div><div class="abs" style="left:112px;top:906.2px;width:2px;height:17px;background:#b8301b"></div><div class="abs" style="left:167.9px;top:906.2px;width:20.8px;height:17px;background:#94802a"></div><div class="abs" style="left:113px;top:924.2px;width:0.7px;height:17px;background:#8a702a"></div><div class="abs" style="left:188.2px;top:924.2px;width:0.7px;height:17px;background:#8a802a"></div><div class="abs" style="left:14px;top:978px;width:11px;height:11px;border-radius:2px;background:#c8c424"></div><div class="abs fh" style="top:974px">http-nio-8080-exec-7</div><div class="abs fb" style="left:6px;top:1000.5px;width:1839px;height:17px;background:#937d24"><span>http-nio-8080-exec-7</span></div><div class="abs fb" style="left:119px;top:1018.5px;width:197.2px;height:17px;background:#a06a26"><span>doFilter</span></div><div class="abs" style="left:1817.8px;top:1018.5px;width:1.6px;height:17px;background:#8a9a25"></div><div class="abs" style="left:1819.4px;top:1018.5px;width:1.5px;height:17px;background:#5f6e2e"></div><div class="abs" style="left:1845px;top:765px;width:15px;height:269px;background:#f1f1f1"></div><div class="abs" style="left:1847px;top:779px;width:11px;height:30px;background:#c1c1c1"></div><div class="abs" style="left:1828px;top:1016.500px;font-size:11.200px;line-height:14px;color:#8c8c8c;text-decoration:underline;white-space:nowrap">Terms</div><svg class="abs" style="left:1845px;top:765px" width="15" height="269"><path d="M3.500 10l4-4.500l4 4.500z" fill="#a3a3a3"/><path d="M3.500 259l4 4.500l4-4.500z" fill="#505050"/></svg>
<div class="abs legrow" style="top:79px"><div class="legsw" style="background:#2ca02c"></div><div class="legtx">http-nio-8080-exec-1</div></div><div class="abs legrow" style="top:103px"><div class="legsw" style="background:#d62728"></div><div class="legtx">http-nio-8080-exec-6</div></div><div class="abs legrow" style="top:127px"><div class="legsw" style="background:#9467bd"></div><div class="legtx">http-nio-8080-exec-3</div></div><div class="abs legrow" style="top:151px"><div class="legsw" style="background:#8c564b"></div><div class="legtx">http-nio-8080-exec-2</div></div><div class="abs legrow" style="top:175px"><div class="legsw" style="background:#e377c2"></div><div class="legtx">http-nio-8080-exec-8</div></div><div class="abs legrow" style="top:199px"><div class="legsw" style="background:#7f7f7f"></div><div class="legtx">http-nio-8080-exec-9</div></div><div class="abs legrow" style="top:223px"><div class="legsw" style="background:#bcbd22"></div><div class="legtx">http-nio-8080-exec-7</div></div><div class="abs legrow" style="top:247px"><div class="legsw" style="background:#17becf"></div><div class="legtx">http-nio-8080-exec-10</div></div><div class="abs legrow" style="top:271px"><div class="legsw" style="background:#1f77b4"></div><div class="legtx">http-nio-8080-exec-4</div></div><div class="abs legrow" style="top:295px"><div class="legsw" style="background:#ff7f0e"></div><div class="legtx">http-nio-8080-exec-5</div></div><svg class="abs" style="left:0;top:240px" width="6" height="12"><path d="M4.500 1.500v8l-4.500-4z" fill="#e2e2e2"/></svg>
<div class="abs" style="left:15px;top:599px;width:67px;height:77px;box-sizing:border-box;border:2px solid #dedede;border-radius:5px;background:#dedede"></div><div class="abs lvl" style="top:601px;height:24px;line-height:25px;background:#d5d6d8;color:#555a66;border-radius:3px 3px 0 0">Package</div><div class="abs lvl" style="top:626px;height:22px;line-height:24px;background:#333;color:#fff;font-weight:bold;font-size:10.5px;letter-spacing:-0.2px">Class</div><div class="abs lvl" style="top:652px;height:22px;line-height:24px;background:#333;color:#fff;font-weight:bold;font-size:10.5px;letter-spacing:-0.2px;border-radius:0 0 3px 3px">Method</div>
<div class="abs" style="left:1820px;top:437px;width:40px;height:34px;background:#222324;border-radius:1px 0 3px 4px"></div><svg class="abs" style="left:1820px;top:437px" width="40" height="34" viewBox="1820 437 40 34"><path d="M1830.800 447h7.400l7.300 8.300l-6.500 6.800l-8.900-8.400v-6a.8.800 0 0 1 .7-.7z" fill="#b3b3b3"/><circle cx="1833.400" cy="450.100" r="1.300" fill="#222324"/><path d="M1840.300 447.200l8.200 8.200l-6 6.400" fill="none" stroke="#b3b3b3" stroke-width="1.700"/></svg>
<div id="badge" class="abs">call 0 / 0 - 8145</div><div id="track" class="abs"></div><div id="thumb" class="abs"></div><svg class="abs" style="left:139px;top:50px" width="12" height="21"><path d="M3 7.500h5M3 10.500h5M3 13.500h5" stroke="#8d8a84" stroke-width="1"/></svg><div class="abs btn" style="left:416px;width:71px;border-radius:4px 0 0 4px;border-color:#9a9a9a"></div><div class="abs btn" style="left:486px;width:61px;border-radius:0 4px 4px 0;border-color:#5e5e5e;border-left-color:#9a9a9a;background:#2f2f2f"></div><div class="abs btn" style="left:551px;width:97px;border-radius:4px;border-color:#a8a8a8"></div><div class="abs" style="left:440px;top:52px;font-size:11.8px;line-height:16px;color:#fff;white-space:nowrap">Record</div><div class="abs" style="left:513px;top:52px;font-size:11.8px;line-height:16px;color:#7d7d7d;white-space:nowrap">Stop</div><div class="abs" style="left:587px;top:52px;font-size:11.8px;line-height:16px;color:#fff;white-space:nowrap">Settings</div><div class="abs" style="left:681px;top:51px;font-size:12.6px;line-height:17px;letter-spacing:-0.3px;color:#8f8f8f;white-space:nowrap">Search...</div><svg class="abs" style="left:0;top:39px" width="1860" height="60" viewBox="0 39 1860 60"><rect x="427" y="55.500" width="8.600" height="8.600" rx="1.500" fill="#d3262b"/><path d="M435 59.800l4.400-3.600v7.600z" fill="#d3262b"/><rect x="498.500" y="55" width="10" height="10" fill="#808080"/><polygon points="576.10,60.00 576.01,60.90 574.56,61.27 574.25,61.84 574.75,63.25 574.06,63.82 572.77,63.06 572.15,63.25 571.50,64.60 570.60,64.51 570.23,63.06 569.66,62.75 568.25,63.25 567.68,62.56 568.44,61.27 568.25,60.65 566.90,60.00 566.99,59.10 568.44,58.73 568.75,58.16 568.25,56.75 568.94,56.18 570.23,56.94 570.85,56.75 571.50,55.40 572.40,55.49 572.77,56.94 573.34,57.25 574.75,56.75 575.32,57.44 574.56,58.73 574.75,59.35" fill="#e4e4e4"/><circle cx="571.5" cy="60" r="1.66" fill="#2b2b2b"/><polygon points="579.70,56.30 579.61,56.95 578.76,57.20 578.47,57.57 578.45,58.47 577.85,58.71 577.20,58.10 576.73,58.04 575.95,58.47 575.43,58.07 575.64,57.20 575.46,56.77 574.70,56.30 574.79,55.65 575.64,55.40 575.93,55.03 575.95,54.13 576.55,53.89 577.20,54.50 577.67,54.56 578.45,54.13 578.97,54.53 578.76,55.40 578.94,55.83" fill="#e4e4e4"/><circle cx="577.2" cy="56.3" r="0.90" fill="#2b2b2b"/><polygon points="579.70,63.70 579.61,64.35 578.76,64.60 578.47,64.97 578.45,65.87 577.85,66.11 577.20,65.50 576.73,65.44 575.95,65.87 575.43,65.47 575.64,64.60 575.46,64.17 574.70,63.70 574.79,63.05 575.64,62.80 575.93,62.43 575.95,61.53 576.55,61.29 577.20,61.90 577.67,61.96 578.45,61.53 578.97,61.93 578.76,62.80 578.94,63.23" fill="#e4e4e4"/><circle cx="577.2" cy="63.7" r="0.90" fill="#2b2b2b"/><circle cx="662" cy="59" r="3.900" fill="none" stroke="#c4c4c4" stroke-width="1.500"/><path d="M665 62l3.300 3.300" stroke="#c4c4c4" stroke-width="1.800" stroke-linecap="round"/><circle cx="1828.500" cy="67" r="17.500" fill="#2f3032"/><path d="M1838 80l9 6l-14-2z" fill="#2f3032"/><path d="M1829 55.700C1824.800 55.700 1821.800 59 1821.800 62.800C1821.800 66.500 1824.600 68 1825.800 73L1832.200 73C1833.400 68 1836.200 66.500 1836.200 62.800C1836.200 59 1833.200 55.700 1829 55.700Z" fill="#d6d6d6"/><rect x="1825.800" y="74.200" width="6.400" height="1.500" rx=".5" fill="#d6d6d6"/><rect x="1826.800" y="76.500" width="4.400" height="1.500" rx=".5" fill="#d6d6d6"/></svg>
<div id="strip" class="abs"></div><div id="strip2" class="abs"></div><div id="tabs" class="abs"></div><svg class="abs" style="left:0;top:0" width="1860" height="4"><rect x="5" y="2" width="1548" height="1" fill="#5f86c6"/><rect x="125" y="0" width="1" height="3" fill="#6f93cf"/><rect x="228" y="0" width="1" height="3" fill="#6f93cf"/><rect x="330" y="0" width="1" height="3" fill="#6f93cf"/><rect x="433" y="0" width="1" height="3" fill="#6f93cf"/><rect x="536" y="0" width="1" height="3" fill="#6f93cf"/><rect x="638" y="0" width="1" height="3" fill="#6f93cf"/><rect x="741" y="0" width="1" height="3" fill="#6f93cf"/><rect x="844" y="0" width="1" height="3" fill="#6f93cf"/><rect x="947" y="0" width="1" height="3" fill="#6f93cf"/><rect x="1049" y="0" width="1" height="3" fill="#6f93cf"/><rect x="1152" y="0" width="1" height="3" fill="#6f93cf"/><rect x="1255" y="0" width="1" height="3" fill="#6f93cf"/><rect x="1357" y="0" width="1" height="3" fill="#6f93cf"/><rect x="1460" y="0" width="1" height="3" fill="#6f93cf"/><path d="M5 0h7.500q-.5 2.500-3.500 3h-4z" fill="#2f5fc0"/><rect x="1553" y="0" width="110" height="3" fill="#f4f6fa"/><rect x="1663" y="2" width="102" height="1" fill="#5f86c6"/><rect x="1765" y="0" width="95" height="3" fill="#3a63c2"/></svg><div id="toolbar" class="abs"></div><div id="tbline" class="abs"></div><div id="url" class="abs"></div><div id="urltxt" class="abs">com.flow.webapp.s3-website-eu-west-1.amazonaws.com</div><svg class="abs" style="left:0;top:0" width="1860" height="39"><g fill="none" stroke="#4a4a4a" stroke-width="2.6" stroke-linecap="round" stroke-linejoin="round"><path d="M29 20.5H17M22 14.5L16 20.5L22 26"/></g><g fill="none" stroke="#cfcfcf" stroke-width="2.6" stroke-linecap="round" stroke-linejoin="round"><path d="M45 20.5H57M52 14.5L58 20.5L52 26"/></g><path d="M85.5 16.2A6.6 6.6 0 1 0 86.6 23" fill="none" stroke="#4a4a4a" stroke-width="2.6"/><path d="M88 12.5V19.2H81.3Z" fill="#4a4a4a"/><path d="M107.5 13.5h6l3.5 3.5v10.500h-9.500z" fill="#fafafa" stroke="#8a8a8a" stroke-width="1"/><path d="M113.5 13.5v3.5h3.5" fill="none" stroke="#8a8a8a" stroke-width="1"/><polygon points="1555.7,12.0 1558.1,18.0 1564.4,18.4 1559.5,22.4 1561.1,28.6 1555.7,25.2 1550.3,28.6 1551.9,22.4 1547.0,18.4 1553.3,18.0" fill="#fff" stroke="#555" stroke-width="1.3" stroke-linejoin="round"/><circle cx="1587.500" cy="20.400" r="9.500" fill="#45d08c"/><path d="M1584.300 23.500A4.400 4.400 0 1 1 1591.900 20.400C1591.900 23.300 1590.600 25.300 1587.900 25.800" fill="none" stroke="#fff" stroke-width="3" stroke-linecap="round"/><defs><linearGradient id="hfl" x1="0" y1="0" x2="0" y2="1"><stop offset="0" stop-color="#e53935"/><stop offset=".55" stop-color="#f4511e"/><stop offset="1" stop-color="#ef6c00"/></linearGradient><radialGradient id="hfc" cx=".5" cy=".62" r=".6"><stop offset="0" stop-color="#ffd21a"/><stop offset=".6" stop-color="#ffa000"/><stop offset="1" stop-color="#f06000"/></radialGradient></defs><path d="M1619.300 11C1620.500 13.500 1622.500 14.500 1623.300 16.500C1624 15.800 1624.600 15.200 1625.200 14.800C1625.600 17 1627 19 1627 22A7.700 7.500 0 0 1 1611.600 22C1611.600 19 1613 17.500 1613.400 15C1614.200 15.600 1614.800 16.200 1615.300 17C1616 14.800 1618.300 13.500 1619.300 11Z" fill="url(#hfl)"/><circle cx="1619.300" cy="22.400" r="7" fill="url(#hfc)"/><ellipse cx="1617" cy="20.600" rx=".9" ry="1.250" fill="#1a0a00"/><ellipse cx="1621.800" cy="20.600" rx=".9" ry="1.250" fill="#1a0a00"/><path d="M1614.900 23.300Q1619.300 28.400 1623.700 23.300" fill="none" stroke="#3e1500" stroke-width="1.100" stroke-linecap="round"/><ellipse cx="1619.300" cy="29.300" rx="5" ry=".7" fill="#000" opacity=".18"/><rect x="1642.500" y="12" width="17" height="17" fill="#fff"/><rect x="1645" y="11" width="13" height="2" fill="#b400ff"/><rect x="1641.800" y="14" width="2" height="13" fill="#ff0a6c"/><rect x="1658.800" y="14" width="2" height="13" fill="#1de9a0"/><rect x="1645" y="27.800" width="13" height="2" fill="#f5b800"/><path d="M1651.300 13.300l2.700 3.300h-5.400zM1651.300 27.300l2.700-3.300h-5.400zM1643.800 20.300l3.300-2.700v5.400zM1658.800 20.300l-3.300-2.700v5.400z" fill="#000"/><path d="M1651.300 16v9M1646.500 20.300h9.500" stroke="#000" stroke-width="1.200" stroke-dasharray="1.200 1"/><text x="1674" y="27.800" textLength="19" lengthAdjust="spacingAndGlyphs" font-family='"Liberation Serif", serif' font-weight="bold" font-size="24" fill="#c8412d">A</text><circle cx="1715.400" cy="20.300" r="9.500" fill="#cdcdcd"/><ellipse cx="1715.600" cy="20.400" rx="3.500" ry="5.900" transform="rotate(22 1715.600 20.400)" fill="#f6f6f6"/><path d="M1717 11.200a9.500 9.500 0 0 1 7.500 11.500a10 10 0 0 0-7.500-11.500z" fill="#ececec"/><path d="M1709 24a8 8 0 0 0 11 3.500a9 9 0 0 1-8-10z" fill="#b5b5b5"/><path d="M1747.5 20.8L1747.5 14.8M1747.5 20.8L1753.2 18.9M1747.5 20.8L1751.0 25.7M1747.5 20.8L1744.0 25.7M1747.5 20.8L1741.8 18.9" stroke="#a2a2a2" stroke-width="2.700" stroke-linecap="round" fill="none"/><path d="M1779.300 11.500l8.200 2.900l-1.300 10.600l-6.900 3.800l-6.900-3.800l-1.300-10.600z" fill="#a9a9a9"/><path d="M1779.300 11.500l8.200 2.900l-1.300 10.600l-6.900 3.800z" fill="#8f8f8f"/><path d="M1779.300 13.800l-5 11.200h1.900l1-2.600h4.300l1 2.600h1.900zM1779.300 17.600l1.500 3.400h-3z" fill="#f0f0f0"/><rect x="1804.500" y="13.500" width="14" height="14" rx="1" fill="#b9b9b9"/><rect x="1807" y="16.500" width="9" height="3" fill="#f1f1f1"/><rect x="1807" y="21.500" width="3.500" height="3.500" fill="#f1f1f1"/><rect x="1812.500" y="21.500" width="3.500" height="3.500" fill="#f1f1f1"/><g fill="#484848"><rect x="1836.700" y="14.200" width="13" height="2.600" rx="1"/><rect x="1836.700" y="19.300" width="13" height="2.600" rx="1"/><rect x="1836.700" y="24.400" width="13" height="2.600" rx="1"/></g></svg>
</body></html>
